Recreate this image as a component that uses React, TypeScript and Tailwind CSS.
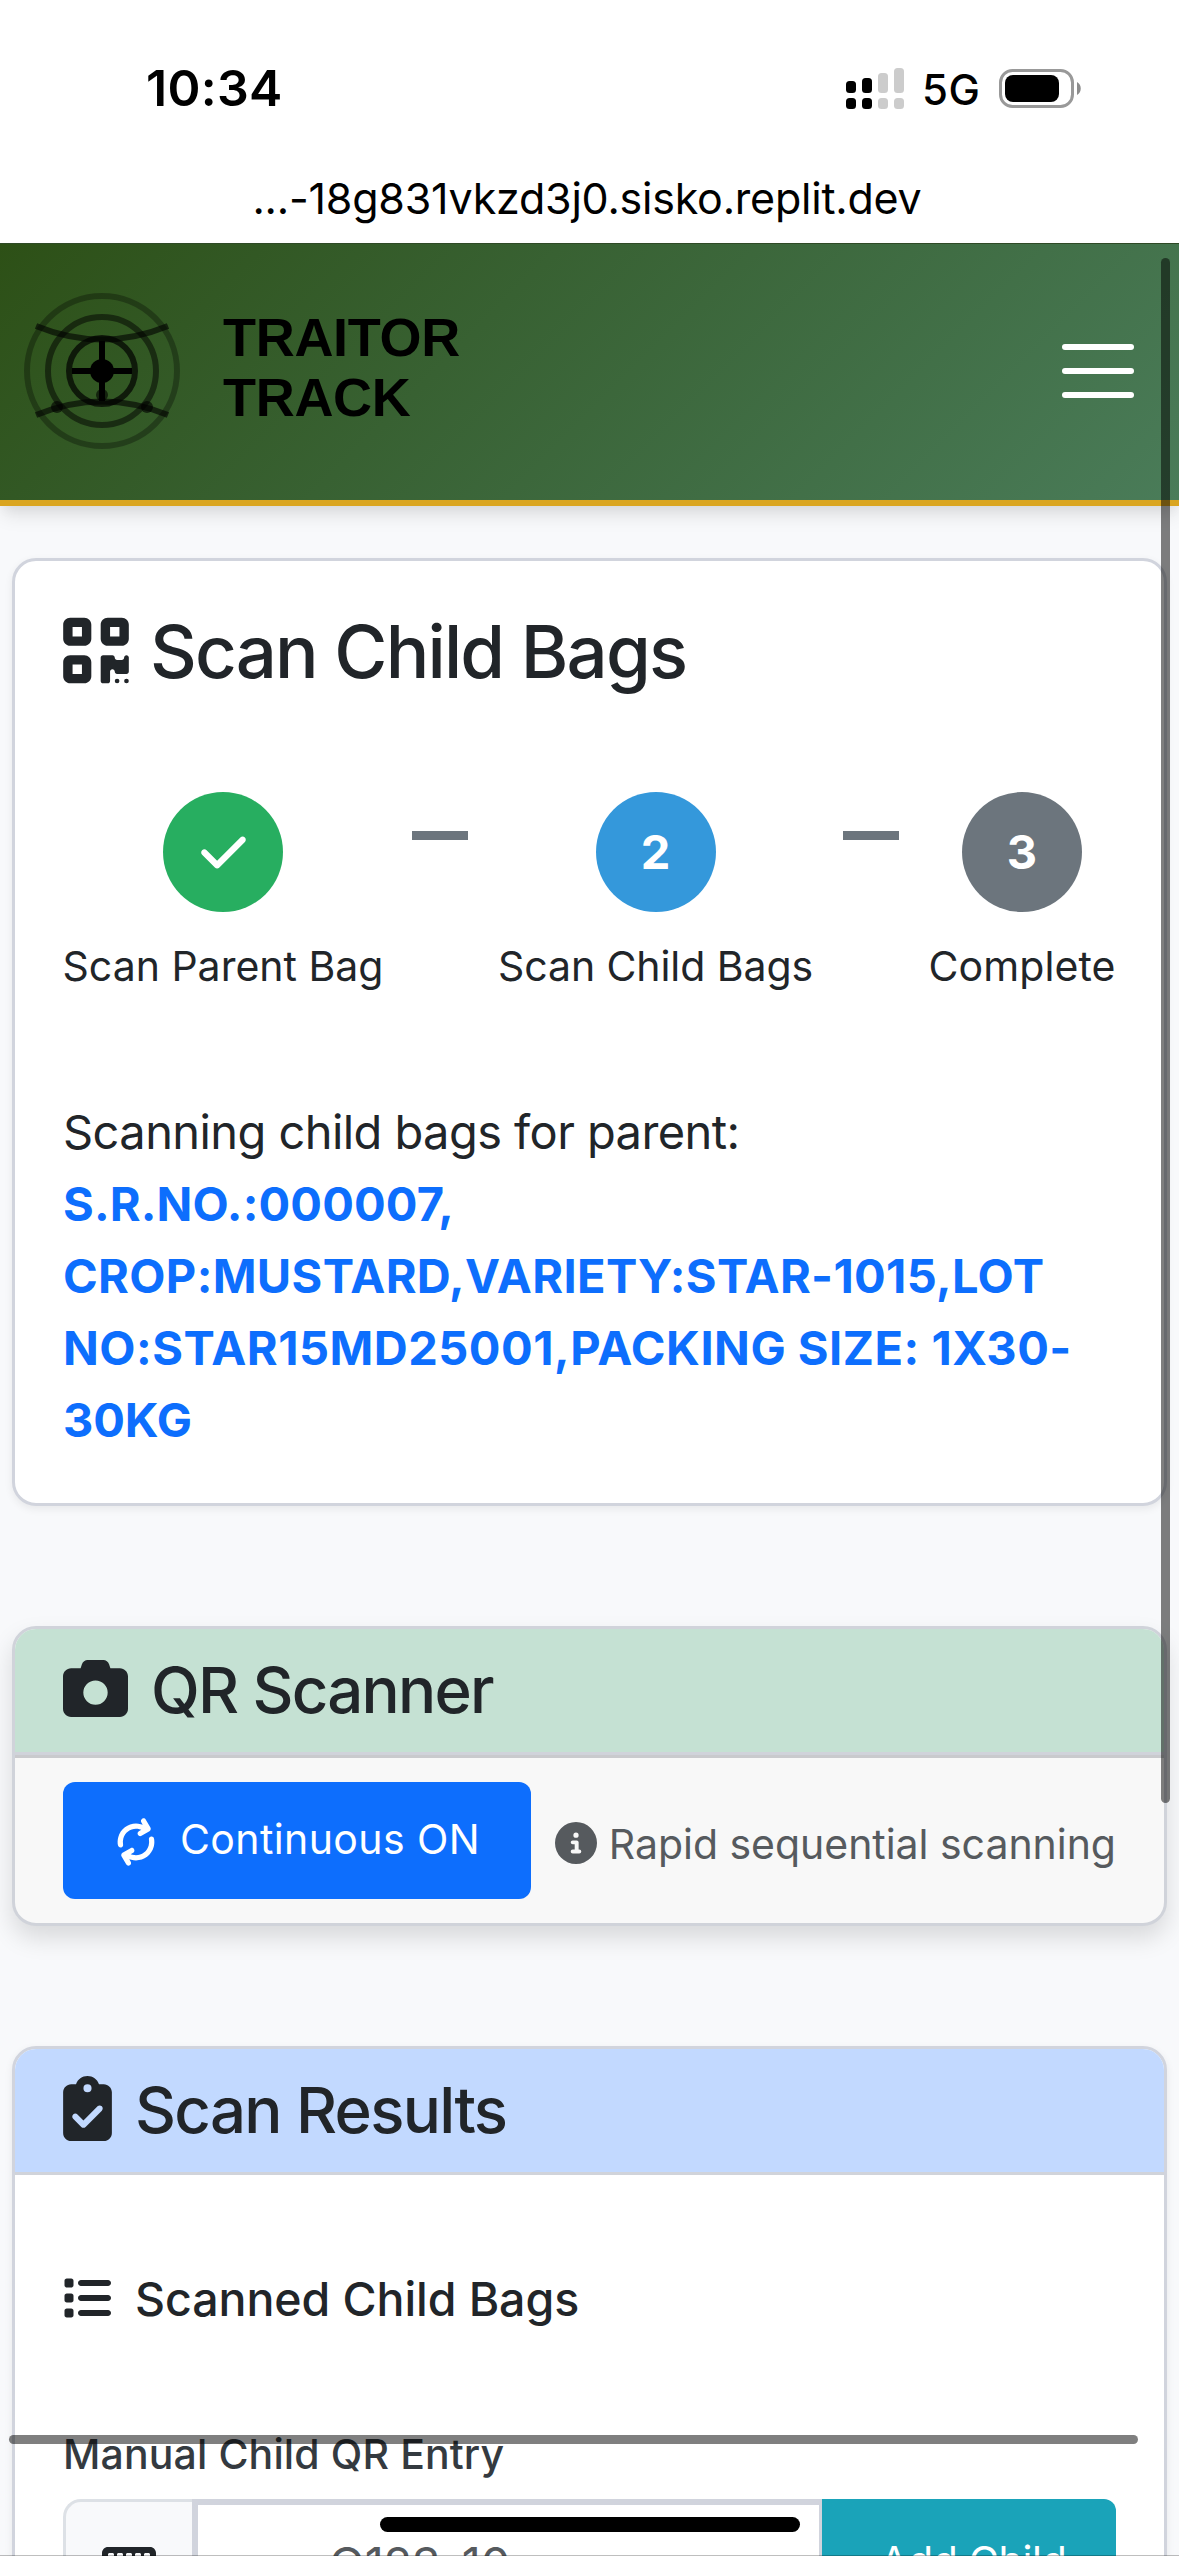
import { Fragment } from 'react';
import {
  FaArrowsRotate,
  FaCamera,
  FaCheck,
  FaCircleInfo,
  FaClipboardCheck,
  FaKeyboard,
  FaList,
  FaQrcode,
} from 'react-icons/fa6';

const steps = [
  { label: 'Scan Parent Bag', mark: <FaCheck size={51} />, circle: 'bg-[#27ae60]', width: 'w-[320px]', tracking: '' },
  { label: 'Scan Child Bags', mark: '2', circle: 'bg-[#3498db]', width: 'w-[316px]', tracking: 'tracking-[-0.08px]' },
  { label: 'Complete', mark: '3', circle: 'bg-[#6c757d]', width: 'w-[188px]', tracking: 'tracking-[0.1px]' },
];

const bagLines = [
  { text: 'S.R.NO.:000007,', tracking: 'tracking-[0.14px]' },
  { text: 'CROP:MUSTARD,VARIETY:STAR-1015,LOT', tracking: 'tracking-[0.34px]' },
  { text: 'NO:STAR15MD25001,PACKING SIZE: 1X30-', tracking: 'tracking-[0.5px]' },
  { text: '30KG', tracking: 'tracking-[-0.1px]' },
];

function Signal() {
  return (
    <svg width="58" height="41" viewBox="0 0 58 41">
      <rect x="0" y="13" width="10" height="12" rx="3.5" />
      <rect x="16" y="10" width="10" height="15" rx="3.5" />
      <rect x="32" y="5" width="10" height="20" rx="3.5" fill="#ccc" />
      <rect x="48" y="0" width="10" height="25" rx="3.5" fill="#ccc" />
      <rect x="0" y="30" width="10" height="11" rx="3.5" />
      <rect x="16" y="30" width="10" height="11" rx="3.5" />
      <rect x="32" y="30" width="10" height="11" rx="3.5" fill="#ccc" />
      <rect x="48" y="30" width="10" height="11" rx="3.5" fill="#ccc" />
    </svg>
  );
}

function Battery() {
  return (
    <svg width="83" height="39" viewBox="0 0 83 39">
      <rect x="1.5" y="1.5" width="72" height="36" rx="12" fill="none" stroke="#999" strokeWidth="3" />
      <rect x="6" y="6" width="54" height="27" rx="8" />
      <path d="M78 13c5 2.500 5 10.500 0 13z" fill="#8c8c8c" />
    </svg>
  );
}

function Logo() {
  return (
    <svg width="156" height="156" viewBox="0 0 156 156" fill="none" stroke="#000" strokeWidth="6">
      <circle cx="78" cy="78" r="75" opacity="0.3" />
      <circle cx="78" cy="78" r="54" opacity="0.5" />
      <circle cx="78" cy="78" r="33" opacity="0.7" />
      <path d="M12 33Q78 60 144 33" opacity="0.6" />
      <path d="M12 122Q78 95 144 122" opacity="0.6" />
      <path d="M78 48V108M48 78H108" />
      <g fill="#000" stroke="none">
        <circle cx="78" cy="78" r="12" />
        <circle cx="33" cy="114" r="6" opacity="0.6" />
        <circle cx="123" cy="114" r="6" opacity="0.6" />
        <circle cx="78" cy="102" r="6" opacity="0.6" />
      </g>
    </svg>
  );
}

function StatusBar() {
  return (
    <div className="h-[243px] bg-white pt-[62px] text-black">
      <div className="flex h-[52px] items-center pr-[97px] pl-[146px]">
        <span className="text-[50px] leading-[52px] font-semibold tracking-[0.3px]">10:34</span>
        <div className="ml-auto flex items-center">
          <Signal />
          <span className="mt-[3px] ml-[18px] w-[59px] text-[42px] leading-[52px] font-medium tracking-[0.5px]">5G</span>
          <div className="ml-[18px]">
            <Battery />
          </div>
        </div>
      </div>
      <div className="mt-[54px] pr-[5px] text-center text-[43px] leading-[60px] tracking-[-0.22px]">
        ...-18g831vkzd3j0.sisko.replit.dev
      </div>
    </div>
  );
}

function Header() {
  return (
    <header className="relative flex h-[263px] items-center border-t border-b-6 border-t-[#2f4a26] border-b-[#daa520] bg-linear-135 from-[#2d5016] to-[#4a7c59] pr-[45px] pb-[2px] pl-[24px] shadow-[0_12px_18px_-3px_rgba(0,0,0,0.1),0_6px_12px_-3px_rgba(0,0,0,0.05)]">
      <Logo />
      <div className="mt-[63px] ml-[43px] self-start font-['Liberation_Sans',sans-serif] text-[54px] leading-[60px] font-bold tracking-[-0.3px] text-black">
        <div>TRAITOR</div>
        <div>TRACK</div>
      </div>
      <div className="ml-auto flex flex-col gap-[18px]">
        <div className="h-[6px] w-[72px] rounded-[3px] bg-white" />
        <div className="h-[6px] w-[72px] rounded-[3px] bg-white" />
        <div className="h-[6px] w-[72px] rounded-[3px] bg-white" />
      </div>
    </header>
  );
}

export default function App() {
  return (
    <div className="relative h-[2556px] w-[1179px] overflow-hidden bg-[#f8f9fb] font-[Inter,sans-serif] text-[#212529]">
      <StatusBar />
      <Header />

      <main className="px-[12px] pt-[52px]">
        <section className="w-[1155px] rounded-[24px] border-3 border-[#d1d4dd] bg-white p-[48px] pt-[47px] shadow-[0_3px_9px_rgba(0,0,0,0.07)]">
          <h2 className="flex items-center text-[72.5px] leading-[87px] font-medium tracking-[-1.83px]">
            <FaQrcode size={75} className="mt-[-3px] mr-[21px] w-[66px] shrink-0" />
            Scan Child Bags
          </h2>

          <div className="mt-[97px] flex items-start justify-between">
            {steps.map((step, i) => (
              <Fragment key={step.label}>
                {i > 0 && <div className="mt-[39px] h-[9px] w-[56px] bg-[#6c757d]" />}
                <div className={`flex flex-col items-center ${step.width}`}>
                  <div className={`flex size-[120px] items-center justify-center rounded-full text-[47px] font-bold text-white ${step.circle}`}>
                    {step.mark}
                  </div>
                  <div className={`mt-[23px] text-[41px] leading-[62px] whitespace-nowrap ${step.tracking}`}>{step.label}</div>
                </div>
              </Fragment>
            ))}
          </div>

          <p className="mt-[99px] mb-[-1px] text-[47px] leading-[72px] whitespace-nowrap">
            <span className="tracking-[-0.57px]">Scanning child bags for parent:</span>
            {bagLines.map((line) => (
              <span key={line.text} className={`block font-bold text-[#0d6efd] ${line.tracking}`}>
                {line.text}
              </span>
            ))}
          </p>
        </section>

        <section className="mt-[120px] w-[1155px] overflow-clip rounded-[24px] border-3 border-[#d0d3da] bg-[#f8f8f8] shadow-[0_12px_24px_rgba(0,0,0,0.13)]">
          <h3 className="flex h-[126px] items-center border-b-3 border-[#d0d3da] bg-[#c5e1d3] pb-[2px] pl-[48px] text-[63.5px] leading-[76px] font-medium tracking-[-1.77px]">
            <FaCamera size={65} className="mt-[-2px] mr-[23px]" />
            QR Scanner
          </h3>
          <div className="flex h-[168px] items-center border-t-3 border-[#c9cacd] px-[48px]">
            <button className="flex h-[117px] w-[469px] items-center rounded-[12px] bg-[#0d6efd] pl-[52px] text-[41px] tracking-[0.4px] text-white">
              <FaArrowsRotate size={42} className="mt-[3px] mr-[23px] -rotate-30" />
              <span className="mt-[-1px]">Continuous ON</span>
            </button>
            <div className="ml-[24px] flex items-center text-[41px] leading-[60px] tracking-[-0.03px] whitespace-nowrap text-[#565a5e]">
              <FaCircleInfo size={42} className="mt-[4px] mr-[12px]" />
              <span className="mt-[6px]">Rapid sequential scanning</span>
            </div>
          </div>
        </section>

        <section className="mt-[120px] h-[760px] w-[1155px] overflow-clip rounded-[24px] border-3 border-[#d1d4dd] bg-white shadow-[0_3px_9px_rgba(0,0,0,0.07)]">
          <h3 className="flex h-[126px] items-center border-b-3 border-[#d0d3da] bg-[#c2d9ff] pb-[2px] pl-[48px] text-[63.5px] leading-[76px] font-medium tracking-[-1.7px]">
            <FaClipboardCheck size={65} className="mt-[-2px] mr-[23px] w-[49px]" />
            Scan Results
          </h3>
          <div className="px-[48px] pt-[96px]">
            <h4 className="flex items-center text-[46.5px] leading-[56px] font-medium tracking-[-0.08px]">
              <FaList size={48} className="mt-[-2px] mr-[24px]" />
              Scanned Child Bags
            </h4>
            <div className="mt-[96px] text-[41px] leading-[62px] font-medium tracking-[0.12px] text-[#343a40]">
              Manual Child QR Entry
            </div>
            <div className="mt-[14px] flex h-[132px]">
              <div className="flex w-[129px] items-center justify-center rounded-l-[18px] border-3 border-r-0 border-[#dde1e6] bg-[#f8f9fb]">
                <FaKeyboard size={54} className="h-[48px]" />
              </div>
              <div className="flex w-[630px] items-center border-6 border-r-3 border-[#d1d4dd] bg-white pb-[2px] pl-[131px] text-[47px] tracking-[-0.3px] text-[#565a5e]">
                Q123-10
              </div>
              <div className="flex flex-1 items-center rounded-r-[12px] bg-[#1aa3b9] pb-[6px] pl-[58px] text-[41px] tracking-[-0.3px] whitespace-nowrap text-white">
                Add Child
              </div>
            </div>
          </div>
        </section>
      </main>

      <div className="absolute top-[258px] left-[1161px] h-[1545px] w-[9px] rounded-full bg-black/50" />
      <div className="absolute top-[2435px] left-[9px] h-[9px] w-[1129px] rounded-full bg-black/50" />
      <div className="absolute top-[2517px] left-[380px] h-[15px] w-[420px] rounded-full bg-black" />
      <div className="absolute bottom-0 left-0 h-px w-full bg-black/25" />
    </div>
  );
}
